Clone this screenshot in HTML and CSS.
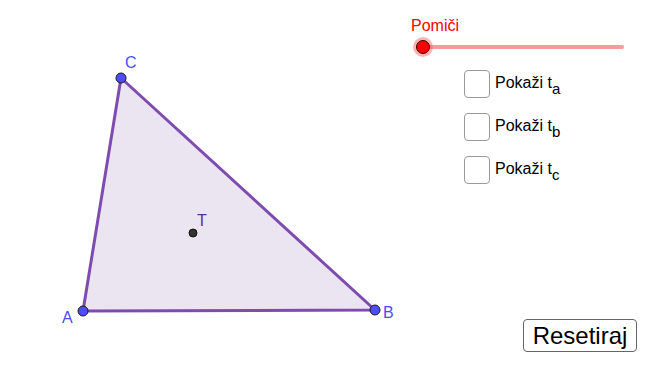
FILE: index.html
```html
<!DOCTYPE html>
<html lang="hr">
<head>
<meta charset="utf-8">
<title>Težišnice trokuta</title>
<link rel="stylesheet" href="styles.css">
</head>
<body>
<div class="applet">
  <svg class="drawing" width="656" height="378" viewBox="0 0 656 378">
    <polygon points="83,311 375,310 121,78" fill="#ebe5f2" stroke="none"/>
    <polyline points="83,311 375,310 121,78 83,311" fill="none" stroke="#7d4cae" stroke-width="3" stroke-linejoin="round"/>
    <circle cx="193" cy="233" r="4" fill="#333" stroke="#111" stroke-width="1"/>
    <circle cx="121" cy="78" r="5" fill="#4d4dff" stroke="#1a1a1a" stroke-width="1"/>
    <circle cx="83" cy="311" r="5" fill="#4d4dff" stroke="#1a1a1a" stroke-width="1"/>
    <circle cx="375" cy="310" r="5" fill="#4d4dff" stroke="#1a1a1a" stroke-width="1"/>
    <text class="lbl" x="125" y="68">C</text>
    <text class="lbl" x="62" y="323">A</text>
    <text class="lbl" x="383" y="318">B</text>
    <text class="lbl lbl-t" x="197" y="226">T</text>
  </svg>

  <div class="slider">
    <div class="slider-caption">Pomiči</div>
    <div class="slider-track">
      <span class="slider-line"></span>
      <span class="slider-knob"></span>
    </div>
  </div>

  <ul class="checks">
    <li class="check"><span class="box"></span><span class="check-text">Pokaži t<sub>a</sub></span></li>
    <li class="check"><span class="box"></span><span class="check-text">Pokaži t<sub>b</sub></span></li>
    <li class="check"><span class="box"></span><span class="check-text">Pokaži t<sub>c</sub></span></li>
  </ul>

  <button class="reset" type="button">Resetiraj</button>
</div>
</body>
</html>
```
FILE: styles.css
```css
* { box-sizing: border-box; }
html, body {
  margin: 0;
  padding: 0;
  background: #ffffff;
}
body {
  font-family: "Liberation Sans", Arial, sans-serif;
}
.applet {
  position: relative;
  width: 656px;
  height: 378px;
  overflow: hidden;
  background: #ffffff;
}
.drawing {
  position: absolute;
  left: 0;
  top: 0;
  display: block;
}
.lbl {
  font-family: "Liberation Sans", Arial, sans-serif;
  font-size: 16px;
  fill: #4d4dff;
}
.lbl-t {
  fill: #5b2d8f;
}

.slider {
  position: absolute;
  left: 410px;
  top: 17px;
  width: 220px;
}
.slider-caption {
  color: #ff0000;
  font-size: 16px;
  line-height: 18px;
  padding-left: 1px;
}
.slider-track {
  position: relative;
  height: 24px;
}
.slider-line {
  position: absolute;
  left: 12px;
  right: 6px;
  top: 10px;
  height: 4px;
  border-radius: 2px;
  background: #ff9999;
}
.slider-knob {
  position: absolute;
  left: 6px;
  top: 5px;
  width: 14px;
  height: 14px;
  border-radius: 50%;
  background: #ff0000;
  border: 1.5px solid #3a0000;
  box-shadow: 0 0 0 3px rgba(255, 90, 90, 0.45);
}

.checks {
  position: absolute;
  left: 464px;
  top: 70px;
  margin: 0;
  padding: 0;
  list-style: none;
  display: flex;
  flex-direction: column;
  gap: 15px;
}
.check {
  display: flex;
  align-items: center;
  gap: 5px;
  height: 28px;
}
.box {
  width: 26px;
  height: 28px;
  border: 1px solid #9a9a9a;
  border-radius: 4px;
  background: #fff;
}
.check-text {
  font-size: 16px;
  color: #000;
  line-height: 20px;
  position: relative;
  top: -1px;
}
.check-text sub {
  font-size: 15px;
  vertical-align: -6px;
  line-height: 0;
}

.reset {
  position: absolute;
  left: 523px;
  top: 319px;
  width: 114px;
  height: 33px;
  padding: 0;
  margin: 0;
  background: #ffffff;
  border: 1px solid #666;
  border-radius: 4px;
  font-family: "Liberation Sans", Arial, sans-serif;
  font-size: 24px;
  color: #000;
  line-height: 31px;
}
```
